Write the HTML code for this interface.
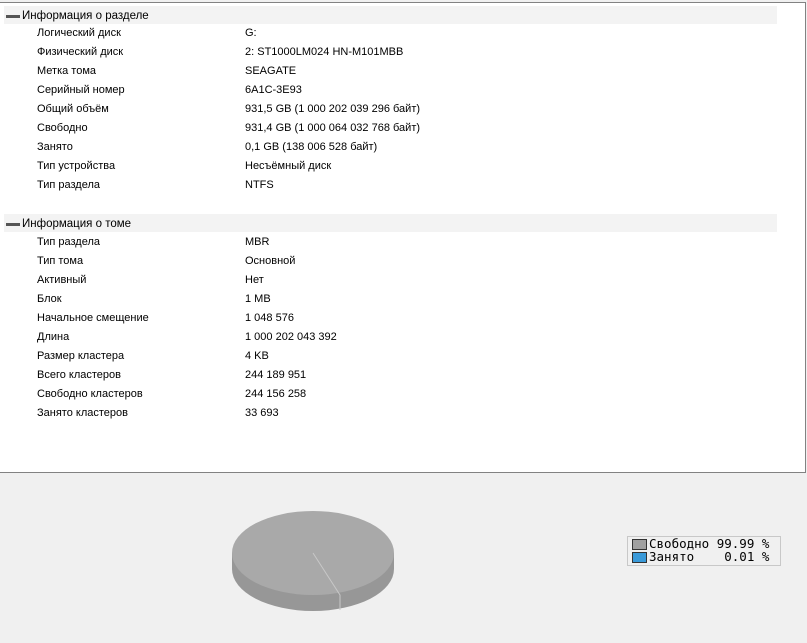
<!DOCTYPE html>
<html><head><meta charset="utf-8"><style>
body{margin:0;width:807px;height:643px;background:#f0f0f0;position:relative;overflow:hidden;font-family:"Liberation Sans","DejaVu Sans",sans-serif;font-size:11px;color:#000}
#top{position:absolute;left:0;top:2px;width:805px;height:469px;background:#fff;border-top:1px solid #828282;border-right:1px solid #828282;border-bottom:1px solid #828282}
.hd{position:absolute;left:4px;width:773px;height:18px;background:#f3f3f3}
.hd span{position:absolute;left:18px;top:4px;font-size:11.5px}
.hd i{position:absolute;left:2px;top:9px;width:14px;height:3px;background:#555}
.r{position:absolute;left:37px;height:19px;line-height:19px;white-space:nowrap;margin-top:1px}
.v{position:absolute;left:245px;height:19px;line-height:19px;white-space:nowrap;margin-top:1px}
#leg{position:absolute;left:627px;top:536px;width:152px;height:28px;border:1px solid #c8c8c8;font-family:"DejaVu Sans Mono","Liberation Mono",monospace;font-size:12.5px;line-height:13px;white-space:pre}
#leg div{position:relative;padding-left:21px}
#leg b{position:absolute;left:4px;top:2px;width:13px;height:9px;border:1px solid #333}
</style></head><body>
<div id="top">
<div class="hd" style="top:3px"><i></i><span>Информация о разделе</span></div>
<div class="r" style="top:20px">Логический диск</div><div class="v" style="top:20px">G:</div>
<div class="r" style="top:39px">Физический диск</div><div class="v" style="top:39px">2: ST1000LM024 HN-M101MBB</div>
<div class="r" style="top:58px">Метка тома</div><div class="v" style="top:58px">SEAGATE</div>
<div class="r" style="top:77px">Серийный номер</div><div class="v" style="top:77px">6A1C-3E93</div>
<div class="r" style="top:96px">Общий объём</div><div class="v" style="top:96px">931,5 GB (1 000 202 039 296 байт)</div>
<div class="r" style="top:115px">Свободно</div><div class="v" style="top:115px">931,4 GB (1 000 064 032 768 байт)</div>
<div class="r" style="top:134px">Занято</div><div class="v" style="top:134px">0,1 GB (138 006 528 байт)</div>
<div class="r" style="top:153px">Тип устройства</div><div class="v" style="top:153px">Несъёмный диск</div>
<div class="r" style="top:172px">Тип раздела</div><div class="v" style="top:172px">NTFS</div>
<div class="hd" style="top:211px"><i></i><span>Информация о томе</span></div>
<div class="r" style="top:229px">Тип раздела</div><div class="v" style="top:229px">MBR</div>
<div class="r" style="top:248px">Тип тома</div><div class="v" style="top:248px">Основной</div>
<div class="r" style="top:267px">Активный</div><div class="v" style="top:267px">Нет</div>
<div class="r" style="top:286px">Блок</div><div class="v" style="top:286px">1 MB</div>
<div class="r" style="top:305px">Начальное смещение</div><div class="v" style="top:305px">1 048 576</div>
<div class="r" style="top:324px">Длина</div><div class="v" style="top:324px">1 000 202 043 392</div>
<div class="r" style="top:343px">Размер кластера</div><div class="v" style="top:343px">4 KB</div>
<div class="r" style="top:362px">Всего кластеров</div><div class="v" style="top:362px">244 189 951</div>
<div class="r" style="top:381px">Свободно кластеров</div><div class="v" style="top:381px">244 156 258</div>
<div class="r" style="top:400px">Занято кластеров</div><div class="v" style="top:400px">33 693</div>
</div>
<svg style="position:absolute;left:0;top:0" width="807" height="643">
<path d="M232 553 L232 569 A81 42 0 0 0 394 569 L394 553 Z" fill="#979797"/>
<ellipse cx="313" cy="553" rx="81" ry="42" fill="#a9a9a9"/>
<path d="M313 553 L340 595 L340 610" stroke="#c8c8c8" stroke-width="1" fill="none"/>
</svg>
<div id="leg"><div><b style="background:#a0a0a0"></b>Свободно 99.99 %</div><div><b style="background:#3a9ad9"></b>Занято    0.01 %</div></div>
</body></html>
